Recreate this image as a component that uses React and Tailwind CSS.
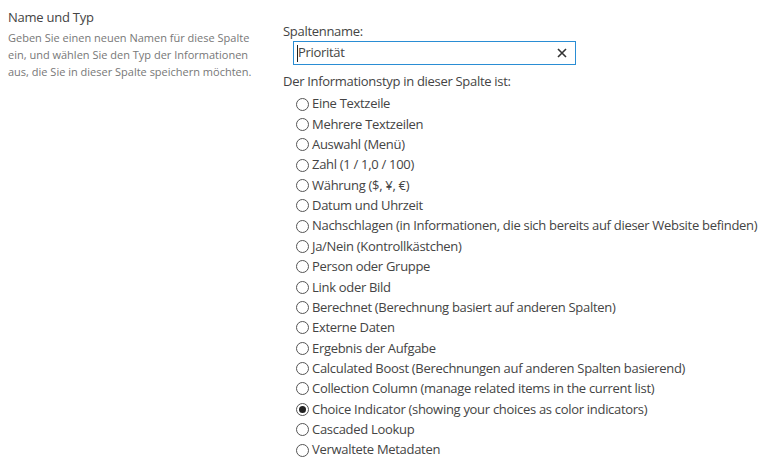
import { useState } from "react";

const options = [
  "Eine Textzeile",
  "Mehrere Textzeilen",
  "Auswahl (Menü)",
  "Zahl (1 / 1,0 / 100)",
  "Währung ($, ¥, €)",
  "Datum und Uhrzeit",
  "Nachschlagen (in Informationen, die sich bereits auf dieser Website befinden)",
  "Ja/Nein (Kontrollkästchen)",
  "Person oder Gruppe",
  "Link oder Bild",
  "Berechnet (Berechnung basiert auf anderen Spalten)",
  "Externe Daten",
  "Ergebnis der Aufgabe",
  "Calculated Boost (Berechnungen auf anderen Spalten basierend)",
  "Collection Column (manage related items in the current list)",
  "Choice Indicator (showing your choices as color indicators)",
  "Cascaded Lookup",
  "Verwaltete Metadaten",
];

const App = () => {
  const [name, setName] = useState("Priorität");
  const [type, setType] = useState("Choice Indicator (showing your choices as color indicators)");

  return (
    <div className="w-[759px] h-[461px] overflow-hidden bg-white text-[#444] font-['Open_Sans',sans-serif] flex">
      {/* left description */}
      <div className="w-[283px] shrink-0 pl-2 pt-[7px]">
        <div className="text-[13px] leading-5 tracking-[-0.25px]">Name und Typ</div>
        <p className="mt-[2px] w-[250px] text-[11px] leading-[17px] text-[#777]">
          Geben Sie einen neuen Namen für diese Spalte ein, und wählen Sie den Typ der Informationen aus, die Sie in dieser Spalte speichern möchten.
        </p>
      </div>

      {/* right form */}
      <div className="flex-1 pt-[21px] text-[13px] tracking-[-0.3px]">
        <label className="block leading-5">Spaltenname:</label>
        <div className="ml-[10px] w-[283px] h-[24px] border border-[#2a8dd4] flex items-center pl-[3px] pr-[8px]">
          <span className="w-px h-[17px] bg-[#222]" />
          <input
            value={name}
            onChange={(e) => setName(e.target.value)}
            className="flex-1 min-w-0 outline-none bg-transparent text-[13px] tracking-[-0.3px] text-[#444]"
          />
          <button className="text-[#333]" onClick={() => setName("")}>
            <svg width="10" height="10" viewBox="0 0 10 10">
              <path d="M1 1L9 9M9 1L1 9" stroke="currentColor" strokeWidth="1.6" />
            </svg>
          </button>
        </div>
        <div className="mt-[6px] leading-5">Der Informationstyp in dieser Spalte ist:</div>
        <div className="mt-[3px] pl-[13px] flex flex-col">
          {options.map((opt) => (
            <label key={opt} className="h-[20.35px] flex items-center whitespace-nowrap cursor-pointer" onClick={() => setType(opt)}>
              <span className="w-[13px] h-[13px] rounded-full border border-[#555] flex items-center justify-center mr-[3px] shrink-0">
                {type === opt && <span className="w-[7px] h-[7px] rounded-full bg-[#222]" />}
              </span>
              <span>{opt}</span>
            </label>
          ))}
        </div>
      </div>
    </div>
  );
};

export default App;
